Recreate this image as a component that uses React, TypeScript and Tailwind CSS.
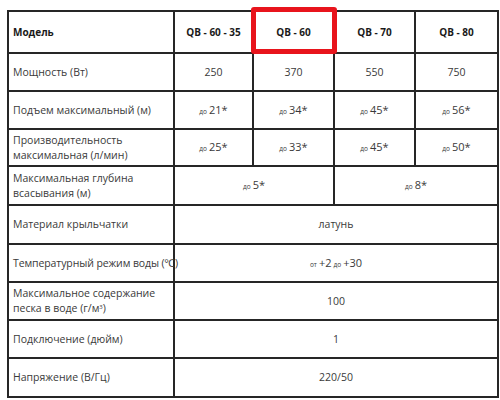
import React from "react";

const Do = ({ v }: { v: string }) => (
  <span>
    <span className="text-[6.5px] mr-[2px]">до</span>
    <span className="text-[11px]">{v}</span>
  </span>
);

const rows: { label: React.ReactNode; cells: { c: React.ReactNode; span: number }[]; h: string }[] = [
  {
    label: "Мощность (Вт)",
    cells: [
      { c: "250", span: 1 },
      { c: "370", span: 1 },
      { c: "550", span: 1 },
      { c: "750", span: 1 },
    ],
    h: "h-[38px]",
  },
  {
    label: "Подъем максимальный (м)",
    cells: [
      { c: <Do v="21*" />, span: 1 },
      { c: <Do v="34*" />, span: 1 },
      { c: <Do v="45*" />, span: 1 },
      { c: <Do v="56*" />, span: 1 },
    ],
    h: "h-[38px]",
  },
  {
    label: (
      <>
        Производительность
        <br />
        максимальная (л/мин)
      </>
    ),
    cells: [
      { c: <Do v="25*" />, span: 1 },
      { c: <Do v="33*" />, span: 1 },
      { c: <Do v="45*" />, span: 1 },
      { c: <Do v="50*" />, span: 1 },
    ],
    h: "h-[37px]",
  },
  {
    label: (
      <>
        Максимальная глубина
        <br />
        всасывания (м)
      </>
    ),
    cells: [
      { c: <Do v="5*" />, span: 2 },
      { c: <Do v="8*" />, span: 2 },
    ],
    h: "h-[39px]",
  },
  {
    label: "Материал крыльчатки",
    cells: [{ c: "латунь", span: 4 }],
    h: "h-[39px]",
  },
  {
    label: <span className="whitespace-nowrap tracking-[-0.1px]">Температурный режим воды (℃)</span>,
    cells: [
      {
        c: (
          <span>
            <span className="text-[6.5px] mr-[2px]">от</span>
            <span className="text-[11px]">+2</span>
            <span className="text-[6.5px] mx-[2px]">до</span>
            <span className="text-[11px]">+30</span>
          </span>
        ),
        span: 4,
      },
    ],
    h: "h-[38px]",
  },
  {
    label: (
      <>
        Максимальное содержание
        <br />
        песка в воде (г/м<sup className="text-[6px]">3</sup>)
      </>
    ),
    cells: [{ c: "100", span: 4 }],
    h: "h-[38px]",
  },
  {
    label: "Подключение (дюйм)",
    cells: [{ c: "1", span: 4 }],
    h: "h-[38px]",
  },
  {
    label: "Напряжение (В/Гц)",
    cells: [{ c: "220/50", span: 4 }],
    h: "h-[39px]",
  },
];

export default function App() {
  return (
    <div
      className="w-[500px] h-[400px] bg-white overflow-hidden pt-[10px] pl-[7px] relative"
      style={{ fontFamily: '"Open Sans", "Noto Sans", sans-serif' }}
    >
      <table className="table-fixed border-collapse w-[490px] text-[#3a3a3a] text-[10.5px] leading-[15px]">
        <colgroup>
          <col className="w-[166px]" />
          <col className="w-[79px]" />
          <col className="w-[81px]" />
          <col className="w-[81px]" />
          <col className="w-[83px]" />
        </colgroup>
        <tbody>
          <tr className="h-[42px] font-bold text-[#1a1a1a]">
            <td className="border-2 border-[#262626] pl-[4px] text-[10px]">Модель</td>
            <td className="border-2 border-[#262626] text-center text-[10px]">QB - 60 - 35</td>
            <td className="border-2 border-[#262626] text-center text-[10px]">QB - 60</td>
            <td className="border-2 border-[#262626] text-center text-[10px]">QB - 70</td>
            <td className="border-2 border-[#262626] text-center text-[10px]">QB - 80</td>
          </tr>
          {rows.map((r, i) => (
            <tr key={i} className={r.h}>
              <td className="border-2 border-[#262626] pl-[4px]">{r.label}</td>
              {r.cells.map((c, j) => (
                <td key={j} colSpan={c.span} className="border-2 border-[#262626] text-center">
                  {c.c}
                </td>
              ))}
            </tr>
          ))}
        </tbody>
      </table>
      <div className="absolute left-[251px] top-[7px] w-[86px] h-[47px] border-[5px] border-[#e8141c] rounded-[3px]" />
    </div>
  );
}
